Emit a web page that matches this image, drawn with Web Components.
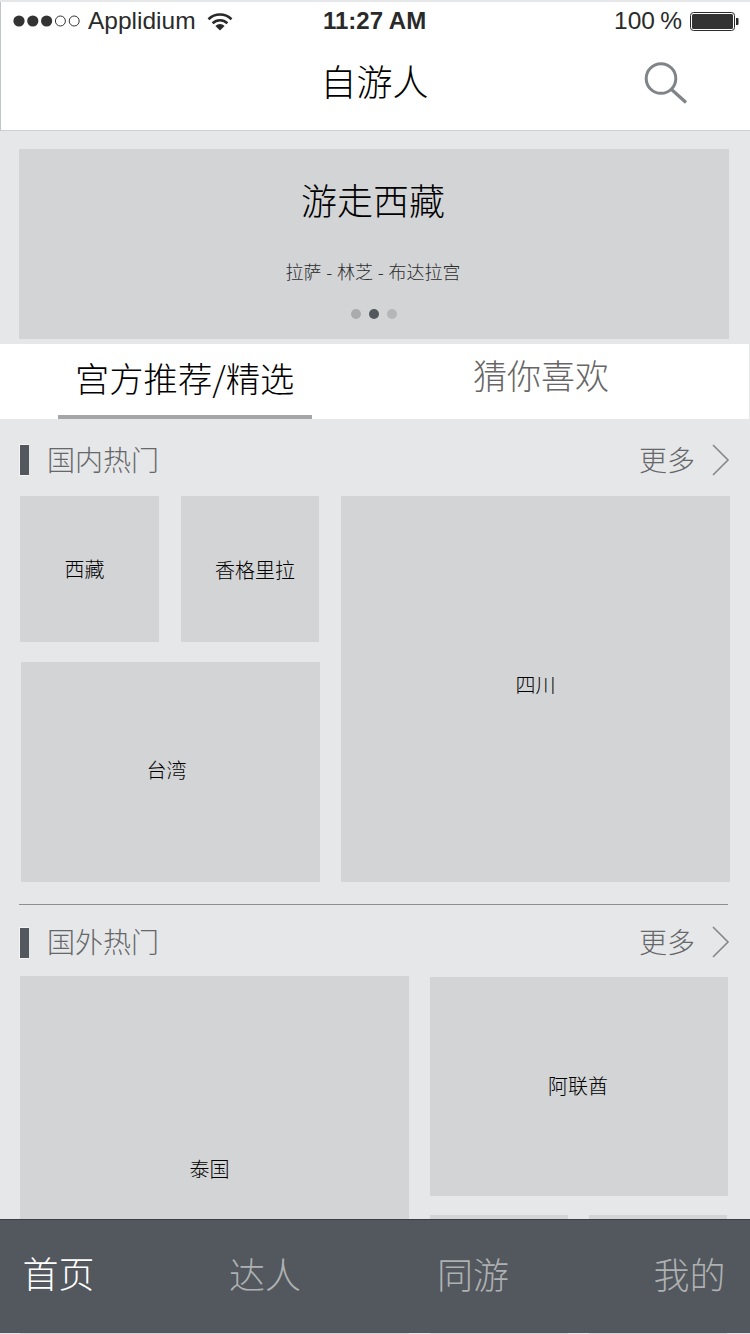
<!DOCTYPE html>
<html lang="zh">
<head>
<meta charset="utf-8">
<title>自游人</title>
<style>
  html, body { margin: 0; padding: 0; background: #e6e7e9; }
  body { font-family: "Noto Sans CJK SC", "Noto Sans", sans-serif; font-weight: 300; }
  app-page > .rule { display: block; height: 1px; background: #8c8e91; margin: 22px 22px 0 19px; }
</style>
</head>
<body>
<app-page>
  <app-header title-name="自游人"></app-header>
  <hero-banner heading="游走西藏" sub="拉萨 - 林芝 - 布达拉宫"></hero-banner>
  <tab-strip first="宫方推荐/精选" second="猜你喜欢"></tab-strip>

  <section-head label="国内热门" top="25"></section-head>
  <domestic-grid>
    <place-tile dx="-5">西藏</place-tile>
    <place-tile dx="5" dy="1">香格里拉</place-tile>
    <place-tile class="wide" dx="-4" dy="-2">台湾</place-tile>
    <place-tile class="tall" dy="-4">四川</place-tile>
  </domestic-grid>

  <div class="rule"></div>

  <section-head label="国外热门" top="21" low></section-head>
  <abroad-grid>
    <place-tile class="big" dx="-5" dy="-7">泰国</place-tile>
    <place-tile class="mid" dx="-1" dy="-1">阿联酋</place-tile>
    <place-tile class="small"></place-tile>
    <place-tile class="small"></place-tile>
  </abroad-grid>

  <bottom-tabs></bottom-tabs>
</app-page>

<script>
  class AppPage extends HTMLElement {
    constructor () {
      super()
      this.attachShadow({ mode: 'open' })
      this.shadowRoot.innerHTML = `
        <style>
          :host {
            display: block;
            position: relative;
            width: 750px;
            height: 1334px;
            overflow: hidden;
            background: #e6e7e9;
          }
        </style>
        <slot></slot>
      `
    }
  }

  class AppHeader extends HTMLElement {
    constructor () {
      super()
      this.attachShadow({ mode: 'open' })
    }

    connectedCallback () {
      let dots = ''
      for (let i = 0; i < 5; i++) {
        const cx = 6 + i * 13.8
        dots += i < 3
          ? `<circle cx="${cx}" cy="6" r="5.6" fill="#333"/>`
          : `<circle cx="${cx}" cy="6" r="5" fill="none" stroke="#333" stroke-width="1"/>`
      }
      this.shadowRoot.innerHTML = `
        <style>
          :host {
            display: block;
            margin-top: 2px;
            background: #fff;
            border-left: 1px solid #c4c5c8;
            border-bottom: 1px solid #cfd0d2;
            height: 128px;
            color: #222;
          }
          .status {
            height: 38px;
            display: grid;
            grid-template-columns: 12px 68px 7px 108px 11px 26px 90px 103px 188px 67px 9px 49px;
            align-items: center;
            font-family: "Liberation Sans", Arial, sans-serif;
            font-size: 24.5px;
            font-weight: 400;
            color: #2a2a2a;
            white-space: nowrap;
          }
          .status svg { display: block; }
          .time { font-weight: 700; font-size: 24px; }
          .pct { word-spacing: -1.5px; }
          .nav {
            position: relative;
            height: 90px;
            display: flex;
            justify-content: center;
            padding: 14px 2px 0 0;
            box-sizing: border-box;
            font-size: 36px;
            line-height: 52px;
            color: #000;
          }
          .search { position: absolute; left: 642px; top: 20px; }
        </style>
        <div class="status">
          <span></span>
          <svg width="68" height="12" viewBox="0 0 68 12">${dots}</svg>
          <span></span>
          <span>Applidium</span>
          <span></span>
          <svg width="26" height="19" viewBox="0 0 26 19">
            <path d="M1.5 7.2a16.5 16.5 0 0 1 23 0" fill="none" stroke="#2a2a2a" stroke-width="2.6"/>
            <path d="M5.6 11.2a10.6 10.6 0 0 1 14.8 0" fill="none" stroke="#2a2a2a" stroke-width="2.6"/>
            <path d="M8.4 14a6.4 6.4 0 0 1 9.2 0L13 18.6z" fill="#2a2a2a"/>
          </svg>
          <span></span>
          <span class="time">11:27 AM</span>
          <span></span>
          <span class="pct">100 %</span>
          <span></span>
          <svg width="49" height="19" viewBox="0 0 49 19">
            <rect x=".5" y=".5" width="44" height="18" rx="3" fill="#fff" stroke="#2a2a2a"/>
            <rect x="2" y="2" width="41" height="15" rx="1.5" fill="#333"/>
            <path d="M46 6h1.5a1 1 0 0 1 1 1v5a1 1 0 0 1-1 1H46z" fill="#2a2a2a"/>
          </svg>
        </div>
        <div class="nav">
          <span>${this.getAttribute('title-name')}</span>
          <svg class="search" width="46" height="46" viewBox="0 0 46 46">
            <circle cx="18" cy="18.5" r="14.8" fill="none" stroke="#808387" stroke-width="3"/>
            <path d="M28 29l15 13.5" fill="none" stroke="#808387" stroke-width="3.2"/>
          </svg>
        </div>
      `
    }
  }

  class HeroBanner extends HTMLElement {
    constructor () {
      super()
      this.attachShadow({ mode: 'open' })
    }

    connectedCallback () {
      this.shadowRoot.innerHTML = `
        <style>
          :host {
            display: flex;
            flex-direction: column;
            align-items: center;
            margin: 18px 21px 0 19px;
            height: 190px;
            background: #d3d4d6;
            color: #000;
          }
          h2 { margin: 23px 2px 0 0; font-size: 36px; line-height: 54px; font-weight: 300; }
          p { margin: 32px 2px 0 0; font-size: 18px; line-height: 26px; color: #2c2c2c; word-spacing: .75px; }
          .dots { display: flex; gap: 8px; margin-top: 25px; }
          .dots i { width: 10px; height: 10px; border-radius: 50%; background: #a9abad; }
          .dots i:nth-child(2) { background: #53575e; }
          .dots i:nth-child(3) { background: #b4b6b8; }
        </style>
        <h2>${this.getAttribute('heading')}</h2>
        <p>${this.getAttribute('sub')}</p>
        <div class="dots"><i></i><i></i><i></i></div>
      `
    }
  }

  class TabStrip extends HTMLElement {
    constructor () {
      super()
      this.attachShadow({ mode: 'open' })
    }

    connectedCallback () {
      this.shadowRoot.innerHTML = `
        <style>
          :host {
            display: grid;
            grid-template-columns: 254px 1fr;
            margin: 5px 1px 0 0;
            padding-left: 58px;
            height: 75px;
            background: #fff;
            font-size: 34px;
            line-height: 50px;
            box-sizing: border-box;
          }
          .on {
            display: block;
            height: 75px;
            box-sizing: border-box;
            padding: 8px 0 0 17px;
            border-bottom: 4px solid #a5a6a8;
            color: #000;
            font-size: 34.3px;
            white-space: nowrap;
          }
          .off { padding: 6px 0 0 161px; color: #666; white-space: nowrap; }
        </style>
        <span class="on">${this.getAttribute('first')}</span>
        <span class="off">${this.getAttribute('second')}</span>
      `
    }
  }

  class SectionHead extends HTMLElement {
    constructor () {
      super()
      this.attachShadow({ mode: 'open' })
    }

    connectedCallback () {
      const low = this.hasAttribute('low')
      this.shadowRoot.innerHTML = `
        <style>
          :host {
            display: flex;
            align-items: center;
            margin-top: ${this.getAttribute('top')}px;
            padding: 0 20px 0 19px;
            height: 31px;
            font-size: 28px;
            color: #666769;
          }
          .bar {
            width: 9px;
            height: 30px;
            background: #53575e;
            border: 1px solid #f4f4f5;
            border-width: 1px 0 1px 1px;
            margin: ${low ? 2 : 0}px 18px 0 0;
            flex: none;
          }
          .label { flex: 1; line-height: 31px; }
          .more { line-height: 31px; }
          svg { margin-left: 17px; display: block; }
        </style>
        <span class="bar"></span>
        <span class="label">${this.getAttribute('label')}</span>
        <span class="more">更多</span>
        <svg width="18" height="32" viewBox="0 0 18 32">
          <path d="M1 1l15 15L1 31" fill="none" stroke="#85878a" stroke-width="1.6"/>
        </svg>
      `
    }
  }

  class DomesticGrid extends HTMLElement {
    constructor () {
      super()
      this.attachShadow({ mode: 'open' })
      this.shadowRoot.innerHTML = `
        <style>
          :host {
            display: grid;
            grid-template-columns: 139px 138px 389px;
            grid-template-rows: 146px 220px;
            column-gap: 22px;
            row-gap: 20px;
            margin: 21px 0 0 20px;
          }
          ::slotted(.wide) { grid-column: 1 / 3; margin: 0 -1px 0 1px; }
          ::slotted(.tall) { grid-column: 3; grid-row: 1 / 3; }
        </style>
        <slot></slot>
      `
    }
  }

  class AbroadGrid extends HTMLElement {
    constructor () {
      super()
      this.attachShadow({ mode: 'open' })
      this.shadowRoot.innerHTML = `
        <style>
          :host {
            display: grid;
            grid-template-columns: 389px 138px 138px;
            grid-template-rows: 220px 160px;
            column-gap: 21px;
            row-gap: 19px;
            margin: 19px 0 0 20px;
          }
          ::slotted(.big) { grid-row: 1 / 3; height: 400px; }
          ::slotted(.mid) { grid-column: 2 / 4; margin-top: 1px; height: 219px; margin-right: -1px; }
        </style>
        <slot></slot>
      `
    }
  }

  class PlaceTile extends HTMLElement {
    constructor () {
      super()
      this.attachShadow({ mode: 'open' })
    }

    connectedCallback () {
      const dx = Number(this.getAttribute('dx') || 0)
      const dy = Number(this.getAttribute('dy') || 0)
      this.shadowRoot.innerHTML = `
        <style>
          :host {
            display: flex;
            align-items: center;
            justify-content: center;
            background: #d3d4d6;
            font-size: 20px;
            font-weight: 300;
            line-height: 28px;
            color: #000;
          }
          span { padding: ${Math.max(dy, 0) * 2}px ${Math.max(-dx, 0) * 2}px ${Math.max(-dy, 0) * 2}px ${Math.max(dx, 0) * 2}px; white-space: nowrap; }
        </style>
        <span><slot></slot></span>
      `
    }
  }

  class BottomTabs extends HTMLElement {
    constructor () {
      super()
      this.attachShadow({ mode: 'open' })
      this.shadowRoot.innerHTML = `
        <style>
          :host {
            position: absolute;
            left: 0;
            right: 0;
            top: 1219px;
            height: 114px;
            box-sizing: border-box;
            border-top: 1px solid #3c3f45;
            background: #53575e;
            display: grid;
            grid-template-columns: 206.5px 208px 216.5px 1fr;
            padding: 27px 0 0 22.5px;
            font-size: 36px;
            line-height: 52px;
            color: #aeb1b1;
          }
          .on { color: #fff; margin-top: -1px; }
        </style>
        <span class="on">首页</span>
        <span>达人</span>
        <span>同游</span>
        <span>我的</span>
      `
    }
  }

  customElements.define('app-page', AppPage)
  customElements.define('app-header', AppHeader)
  customElements.define('hero-banner', HeroBanner)
  customElements.define('tab-strip', TabStrip)
  customElements.define('section-head', SectionHead)
  customElements.define('domestic-grid', DomesticGrid)
  customElements.define('abroad-grid', AbroadGrid)
  customElements.define('place-tile', PlaceTile)
  customElements.define('bottom-tabs', BottomTabs)
</script>
</body>
</html>
